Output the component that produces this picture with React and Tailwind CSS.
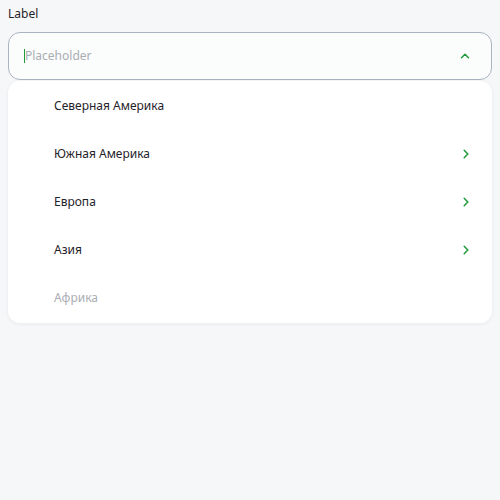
import React from 'react'

const items = [
  { label: 'Северная Америка', sub: false },
  { label: 'Южная Америка', sub: true },
  { label: 'Европа', sub: true },
  { label: 'Азия', sub: true },
  { label: 'Африка', sub: false, disabled: true },
]

const Chevron = ({ up }) => (
  <svg width="10" height="10" viewBox="0 0 10 10" fill="none" stroke="#1f9a3a" strokeWidth="1.5" strokeLinecap="round" strokeLinejoin="round">
    {up ? <path d="M1.5 6.8 5 3.3 8.5 6.8" /> : <path d="M3.2 1.2 6.8 5 3.2 8.8" />}
  </svg>
)

export default function App() {
  return (
    <div className="min-h-[500px] w-[500px] bg-[#f6f7f9] px-2 pt-[6px] font-['Noto_Sans',sans-serif]">
      <div className="text-[12px] leading-4 text-[#1f2329]">Label</div>
      <div className="mt-[10px] flex h-[48px] items-center rounded-xl border border-[#aab4c1] bg-[#fbfcfc] pl-[15px] pr-[21px]">
        <span className="h-[14px] w-px bg-[#1f9a3a]" />
        <span className="flex-1 text-[12px] text-[#a9adb3]">Placeholder</span>
        <Chevron up />
      </div>
      <div className="mt-[1px] rounded-xl bg-white py-[1px] shadow-[0_1px_4px_rgba(20,30,50,0.06)]">
        {items.map((it) => (
          <div key={it.label} className="flex h-[48px] items-center pl-[46px] pr-[21px]">
            <span className={`flex-1 text-[12px] ${it.disabled ? 'text-[#a9adb3]' : 'text-[#1f2329]'}`}>{it.label}</span>
            {it.sub && <Chevron />}
          </div>
        ))}
      </div>
    </div>
  )
}
